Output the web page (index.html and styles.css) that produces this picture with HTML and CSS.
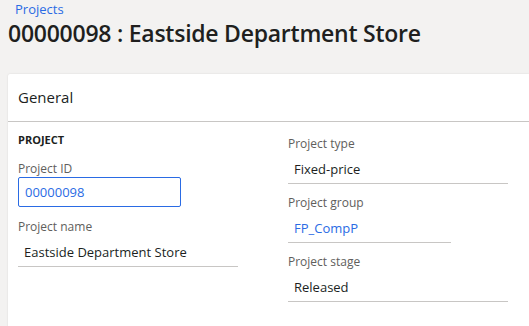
FILE: index.html
```html
<!DOCTYPE html>
<html lang="en">
<head>
    <title>Project 00000098</title>
    <link rel="stylesheet" href="styles.css">
</head>
<body>
    <div class="page-header">
        <a class="breadcrumb" href="#">Projects</a>
        <h1>00000098 : Eastside Department Store</h1>
    </div>

    <div class="card">
        <div class="card-header">General</div>
        <div class="card-body">
            <div class="column left">
                <div class="group-title">PROJECT</div>
                <div class="field">
                    <label for="project_id">Project ID</label>
                    <input class="inputbox" type="text" id="project_id" value="00000098">
                </div>
                <div class="field">
                    <label>Project name</label>
                    <div class="value">Eastside Department Store</div>
                </div>
            </div>
            <div class="column right">
                <div class="field">
                    <label>Project type</label>
                    <div class="value">Fixed-price</div>
                </div>
                <div class="field">
                    <label>Project group</label>
                    <div class="value link short">FP_CompP</div>
                </div>
                <div class="field">
                    <label>Project stage</label>
                    <div class="value">Released</div>
                </div>
            </div>
        </div>
    </div>
</body>
</html>
```

FILE: styles.css
```css
:root {
    --page-bg: #f3f2f1;
    --white: #ffffff;
    --link-blue: #2a6be4;
    --label-gray: #605e5c;
    --dark-text: #201f1e;
    --line-gray: #c8c6c4;
}

body {
    margin: 0;
    background-color: var(--page-bg);
    color: var(--dark-text);
    font-family: 'Open Sans', 'Noto Sans', sans-serif;
}

.page-header {
    padding: 0 8px;
    height: 74px;
}

.breadcrumb {
    display: block;
    padding: 0 0 0 7px;
    color: var(--link-blue);
    text-decoration: none;
    font-size: 13px;
    line-height: 18px;
}

h1 {
    margin: 0;
    font-size: 23px;
    font-weight: 600;
    line-height: 30px;
    letter-spacing: -0.25px;
}

.card {
    margin-left: 8px;
    background-color: var(--white);
    border-radius: 2px 0 0 0;
    box-shadow: 0 0 2px rgba(0, 0, 0, 0.12);
    height: 260px;
}

.card-header {
    height: 47px;
    line-height: 47px;
    padding-left: 10px;
    font-size: 15px;
    border-bottom: 1px solid var(--line-gray);
}

.card-body {
    display: flex;
    padding: 9px 0 0 10px;
}

.column {
    display: flex;
    flex-direction: column;
    gap: 12px;
}

.column.left {
    flex: 0 0 270px;
}

.column.right {
    flex: 1;
    padding-top: 5px;
    gap: 11px;
}

.group-title {
    font-size: 11px;
    font-weight: 700;
    line-height: 18px;
}

.field {
    display: flex;
    flex-direction: column;
    gap: 2px;
}

label {
    color: var(--label-gray);
    font-size: 12px;
    line-height: 16px;
}

.inputbox {
    width: 163px;
    height: 30px;
    margin-top: -2px;
    box-sizing: border-box;
    border: 1px solid var(--link-blue);
    border-radius: 2px;
    padding: 0 6px;
    font-family: inherit;
    font-size: 13px;
    color: var(--link-blue);
    outline: none;
}

.value {
    width: 220px;
    height: 30px;
    line-height: 31px;
    padding-left: 6px;
    box-sizing: border-box;
    font-size: 13px;
    border-bottom: 1px solid var(--line-gray);
}

.value.short {
    width: 163px;
}

.value.link {
    color: var(--link-blue);
}
```
